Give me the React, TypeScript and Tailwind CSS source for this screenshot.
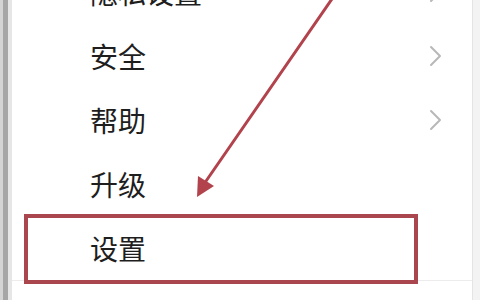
import React from "react";

const Chevron = () => (
  <svg width="16" height="24" viewBox="0 0 16 24" fill="none">
    <polyline points="3,3 12,12 3,21" stroke="#b8b8b8" strokeWidth="2" strokeLinecap="round" strokeLinejoin="round" />
  </svg>
);

const Row = ({ label, chevron }: { label: string; chevron?: boolean }) => (
  <div className="h-16 flex items-center justify-between pl-[78px] pr-[28px] shrink-0">
    <span className="text-[28px] leading-none text-[#1e1e1e]" style={{ fontFamily: '"Noto Sans CJK SC", sans-serif' }}>
      {label}
    </span>
    {chevron ? <Chevron /> : null}
  </div>
);

export default function App() {
  return (
    <div className="relative w-[480px] h-[300px] overflow-hidden bg-white flex">
      <div className="w-[12px] h-full flex">
        <div className="w-[3px] bg-[#d4d4d4]" />
        <div className="w-[5px] bg-[#a6a6a6]" />
        <div className="w-[4px] bg-[#e6e6e6]" />
      </div>
      <div className="flex-1 flex flex-col -mt-[40px]">
        <Row label="隐私设置" chevron />
        <Row label="安全" chevron />
        <Row label="帮助" chevron />
        <Row label="升级" />
        <Row label="设置" />
        <div className="border-t border-[#ececec] h-16" />
      </div>
      <div className="w-[8px] h-full bg-[#f3f3f3] border-l border-[#e4e4e4]" />

      <div className="absolute left-[24px] top-[214px] w-[394px] h-[70px] border-4 border-[#a9464e]" />

      <svg className="absolute left-0 top-0" width="480" height="300" viewBox="0 0 480 300">
        <line x1="334" y1="-4" x2="204" y2="184" stroke="#b2434c" strokeWidth="3" strokeLinecap="round" />
        <polygon points="197,197 198,176 214,186" fill="#b2434c" />
      </svg>
    </div>
  );
}
